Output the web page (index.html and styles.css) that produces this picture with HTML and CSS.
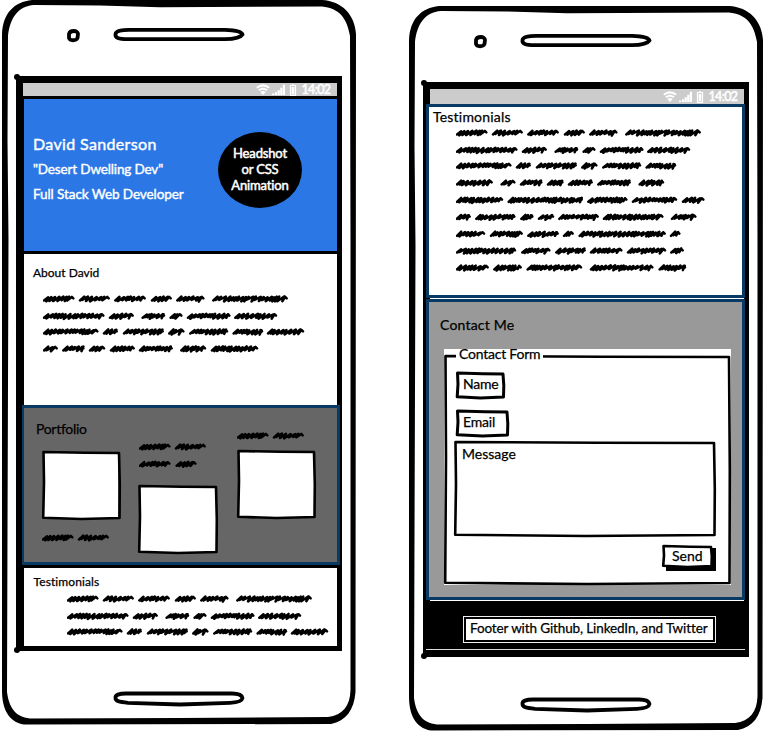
FILE: index.html
```html
<!DOCTYPE html>
<html lang="en">
<head>
<meta charset="utf-8">
<title>David Sanderson – Mobile wireframe</title>
<link rel="stylesheet" href="styles.css">
</head>
<body>
<svg class="defs" aria-hidden="true">
  <symbol id="device" viewBox="0 0 356 725">
    <path fill-rule="evenodd" d="M2 34C3 13 14 2 32 0L322 0C342 1 355 15 356 34L355.500 692C354 710 346 721 331 724L24 724.500C8 722 2 708 2 690Z M8 36L7.500 140L8.500 240L7.500 530L7 692C9 707 15 717 30 718.500L180 718L328 717C343 715 350 706 350.500 690L350.500 240L350 36C347 18 339 8 322 6.500L160 7.200L100 5.500L34 5C18 6 10 18 8 36Z"/>
    <path class="line" d="M69 34C70 30 78 30 78 34L77.500 38C76 41 70 41 69 38Z"/>
    <path class="line" d="M115.500 34C116 30 125 30 130 29.800L225 29.800C235 30 242 32 242.500 34.500C241 37 234 39 225 39.200L128 39.200C118 39 115 38 115.500 34Z"/>
    <path class="line" d="M115.500 698C115 695 119 693.500 126 693.500L232 693.500C239 693.500 242 695 242.500 698C242 701 238 702.500 230 702.800L180 704.500L128 702.800C119 702 115.500 701 115.500 698Z"/>
  </symbol>
  <symbol id="status-icons" viewBox="0 0 42 12">
    <g fill="none" stroke="#fff" stroke-width="2">
      <path d="M.8 3.800Q7 -1 13.200 3.800M2.900 6.300Q7 3.100 11.100 6.300"/>
      <path stroke-width="1.200" d="M34.500 1.500h5v10h-5zM36 .8h2"/>
    </g>
    <path fill="#fff" d="M4.300 8Q7 6.200 9.700 8L7 11ZM16 9.500h2.200v1.500h-2.200zM18.900 8.300h2.200v2.700h-2.200zM21.600 6.300h2.200v4.700h-2.200zM24.200 3.800h2.200v7.200h-2.200zM26.800 .8h2.200v10.200h-2.200zM35.700 3h2.600v7.500h-2.600z"/>
  </symbol>
</svg>

<main class="board">
  <article class="phone">
    <svg class="device"><use href="#device"/></svg>
    <div class="screen">
      <div class="status"><svg><use href="#status-icons"/></svg><span>14:02</span></div>
      <header class="hero">
        <div>
          <h1>David Sanderson</h1>
          <p class="tagline">"Desert Dwelling Dev"</p>
          <p class="role">Full Stack Web Developer</p>
        </div>
        <div class="headshot">Headshot<br>or CSS<br>Animation</div>
      </header>
      <section class="about">
        <h2 class="small about-title">About David</h2>
        <div class="scribble" data-text="about"></div>
      </section>
      <section class="portfolio">
        <h2 class="portfolio-title">Portfolio</h2>
        <div class="projects">
          <div class="project first"><div class="tile sketch"></div><div class="scribble" data-text="caption"></div></div>
          <div class="project second"><div class="scribble" data-text="captionLong"></div><div class="tile sketch"></div></div>
          <div class="project third"><div class="scribble" data-text="caption"></div><div class="tile sketch"></div></div>
        </div>
      </section>
      <section class="preview">
        <h2 class="small preview-title">Testimonials</h2>
        <div class="scribble" data-text="preview"></div>
      </section>
    </div>
  </article>

  <article class="phone lower">
    <svg class="device"><use href="#device"/></svg>
    <div class="screen">
      <div class="status tall"><svg><use href="#status-icons"/></svg><span>14:02</span></div>
      <section class="testimonials">
        <h2 class="testimonials-title">Testimonials</h2>
        <div class="scribble" data-text="testimonials"></div>
      </section>
      <section class="contact">
        <h2 class="contact-title">Contact Me</h2>
        <form class="form">
          <div class="form-frame sketch"></div>
          <div class="legend">Contact Form</div>
          <div class="field name sketch heavy"><span>Name</span></div>
          <div class="field email sketch heavy"><span>Email</span></div>
          <div class="message sketch"><span>Message</span></div>
          <div class="send sketch"><span>Send</span></div>
        </form>
      </section>
      <footer class="footer"><div class="links">Footer with Github, LinkedIn, and Twitter</div></footer>
    </div>
  </article>
</main>
<script src="script.js"></script>
</body>
</html>
```
FILE: styles.css
```css
* { box-sizing: border-box; }
body { margin: 0; background: #fff; color: #000; font-family: Lato, sans-serif; font-size: 14px; font-variant-ligatures: none; -webkit-text-stroke: 0.25px; overflow: hidden; }
h1, h2, p { margin: 0; font-weight: 400; }
h2 { font-size: 14px; line-height: 18px; }
h2.small { font-size: 12px; line-height: 16px; }
svg { display: block; }
.defs { position: absolute; width: 0; height: 0; }
.line { fill: none; stroke: #000; stroke-width: 3.8; }

.board { display: flex; gap: 51px; width: 763px; height: 731px; }
.phone { position: relative; width: 356px; height: 725px; padding: 76px 14px 0 16px; }
.phone.lower { margin-top: 6px; }
.device { position: absolute; left: 0; top: 0; width: 356px; height: 725px; }
.screen { position: relative; height: 575px; border: solid #000; border-width: 7px 5px 5px 7px; display: flex; flex-direction: column; background: #fff; }
.screen::before, .screen::after { content: ""; position: absolute; left: -9px; width: 6px; height: 6px; border-radius: 3px; background: #000; }
.screen::before { top: -9px; }
.screen::after { bottom: -7px; }

.status { flex: none; height: 13px; background: #ccc; color: #fff; display: flex; justify-content: flex-end; align-items: center; gap: 3px; padding-right: 6.5px; font-size: 12.5px; line-height: 13px; letter-spacing: -0.6px; -webkit-text-stroke: 0.5px; }
.status svg { width: 42px; height: 12px; }
.status.tall { height: 15px; }

.hero { flex: none; height: 155px; border: solid #000; border-width: 3px 0 0 1px; background: #2c77e6; color: #fff; display: flex; justify-content: space-between; padding: 35px 35px 0 9px; }
.hero h1 { font-size: 16px; line-height: 20px; letter-spacing: 0.35px; -webkit-text-stroke: 0.4px; }
.hero p { font-size: 13.5px; line-height: 18px; -webkit-text-stroke: 0.4px; }
.hero .tagline { margin-top: 6px; letter-spacing: -0.15px; }
.hero .role { margin-top: 7px; letter-spacing: -0.08px; }
.headshot { width: 84px; height: 76px; margin-top: -2px; padding-top: 14px; border-radius: 50%; background: #000; text-align: center; font-size: 13px; line-height: 15.8px; letter-spacing: -0.15px; -webkit-text-stroke: 0.5px; }

.about { flex: none; height: 154px; border: solid #000; border-width: 3px 0 0 1px; padding: 11px 0 0 9px; }
.about .scribble { margin: 12.5px 0 0 9.7px; }

.portfolio { flex: none; height: 160px; margin: 0 -3px 0 -1px; border: 3px solid #093a66; border-left-width: 2px; background: #666; padding: 11.6px 0 0 12px; }
.portfolio-title { letter-spacing: -0.3px; }
.projects { display: grid; grid-template-columns: repeat(3, 78.5px); gap: 19px; margin: -6.9px 0 0 6px; }
.tile { height: 69px; background: linear-gradient(#fff, #fff) center / calc(100% - 4px) calc(100% - 4px) no-repeat; }
.project { display: flex; flex-direction: column; }
.first { padding-top: 20px; gap: 13px; }
.first .tile, .second .tile { left: -0.5px; }
.second { padding-top: 11px; gap: 16px; margin-left: -1px; }
.third { gap: 9.5px; margin-left: -0.5px; }

.preview { flex: 1; border: solid #000; border-width: 3px 0 0 1px; padding: 5.5px 0 0 9.5px; }
.preview-title { letter-spacing: 0.1px; }
.preview .scribble { margin: 4.2px 0 0 33.2px; }

.testimonials { flex: none; height: 194px; margin: 0 -1px 0 -4px; border: 3px solid #093a66; background: #fff; padding: 0.6px 0 0 4px; }
.testimonials-title { letter-spacing: 0.2px; }
.testimonials .scribble { margin: 2px 0 0 22.7px; }
.contact { flex: none; height: 301px; margin: 1px -1px 0 -4px; border: 3px solid #093a66; background: #999; padding: 13.6px 0 0 11px; }
.contact-title { letter-spacing: 0.2px; }

.sketch { position: relative; }
.sketch > svg { position: absolute; left: 0; top: 0; overflow: visible; }
.sketch > span { position: relative; }
.form { width: 287px; height: 236px; margin: 15.4px 0 0 4px; background: #fff; position: relative; display: flex; flex-direction: column; align-items: flex-start; }
.form-frame.sketch { position: absolute; inset: 6px 0 0 0; }
.legend { position: relative; width: 87px; margin-left: 12px; padding-left: 3px; line-height: 9px; background: #fff; white-space: nowrap; letter-spacing: -0.22px; }
.field { padding-left: 7px; line-height: 24px; letter-spacing: -0.2px; }
.name { width: 49px; height: 26.5px; margin: 14px 0 0 12px; }
.email { width: 53px; height: 27px; margin: 11.5px 0 0 12px; }
.message { width: 262px; height: 96px; margin: 4px 0 0 10px; padding: 4px 0 0 8px; line-height: 18px; }
.send { width: 51px; height: 23px; margin: 8px 0 0 218px; padding-left: 10px; line-height: 22px; background: #fff; }
.send::after { content: ""; position: absolute; left: 4px; top: 3px; right: -3px; bottom: -3px; border: solid #000; border-width: 0 4px 4px 0; }

.footer { flex: 1; margin: 1px -1px 2px -4px; background: #000; border-bottom: 1px solid #ddd; padding: 15px 0 0 37px; box-shadow: 0 2px #000; }
.links { width: 253px; height: 27px; border: 1px solid #eee; box-shadow: inset 0 0 0 2px #000; background: #fff; padding-left: 6px; line-height: 23px; white-space: nowrap; font-size: 13.5px; letter-spacing: -0.12px; }
```
FILE: script.js
```js
const NS = "http://www.w3.org/2000/svg";

// Every line is a list of [start, end] word extents, in thirds of a pixel.
const intro = [
  [[0,94],[108,200],[214,308],[324,386],[400,484],[508,734]],
  [[0,184],[198,272],[296,366],[380,418],[432,562],[574,702]],
  [[0,166],[180,224],[240,362],[376,424],[439,555],[569,660],[672,783]]
];
const texts = {
  about: [...intro, [[0,44],[58,124],[138,186],[201,275],[288,389],[412,489],[504,645]]],
  preview: intro,
  caption: [[[0,94],[108,200]]],
  captionLong: [[[0,94],[108,200]], [[0,94],[110,172]]],
  testimonials: [
    intro[0], intro[1], intro[2].slice(0, 6),
    [[0,110],[134,178],[192,259],[273,322],[336,410],[424,524],[548,624]],
    [[0,141],[155,380],[394,514],[528,663],[678,745]],
    [[0,44],[58,178],[193,232],[246,294],[307,428],[441,622],[645,721]],
    [[0,87],[102,200],[214,308],[321,353],[368,629],[642,673]],
    [[0,180],[196,283],[298,389],[402,499],[513,630],[643,683]],
    [[0,98],[112,197],[212,378],[402,592],[608,690]]
  ]
};
const centers = [5, 22.3, 38, 55, 72.3, 89.3, 106.3, 123, 140];

function addPath(parent, w, h, d, width) {
  const svg = document.createElementNS(NS, "svg");
  svg.setAttribute("width", w);
  svg.setAttribute("height", h);
  const path = document.createElementNS(NS, "path");
  path.setAttribute("d", d);
  path.setAttribute("fill", "none");
  path.setAttribute("stroke", "#000");
  path.setAttribute("stroke-width", width);
  path.setAttribute("stroke-linejoin", "round");
  path.setAttribute("stroke-linecap", "round");
  svg.appendChild(path);
  parent.prepend(svg);
}

document.querySelectorAll(".scribble").forEach(el => {
  const lines = texts[el.dataset.text];
  let seed = 7, d = "", right = 0;
  const rand = () => (seed = (seed * 16807) % 2147483647) / 2147483647;
  lines.forEach((words, row) => {
    const y = centers[row] - 0.3;
    words.forEach(([a, b]) => {
      let x = a / 3 + 1;
      const end = b / 3 - 1;
      right = Math.max(right, end + 2);
      d += `M${x} ${y + 1.8}`;
      while (x < end - 4) {
        const up = 1.4 + rand() * 0.9, down = 1 + rand() * 1.9;
        d += `L${(x + 4.2).toFixed(1)} ${(y - up).toFixed(1)}L${(x + 2.3).toFixed(1)} ${(y + down).toFixed(1)}`;
        x += 2.3 + rand() * 2.7;
      }
      d += `L${end - 1.5} ${y - 1.8}L${end} ${y - 0.4}`;
    });
  });
  addPath(el, right, centers[lines.length - 1] + 5, d, 2.5);
});

document.querySelectorAll(".sketch").forEach(el => {
  const w = el.offsetWidth, h = el.offsetHeight;
  const d = `M1.500 1L${w * .55} 1.800L${w - 2} 2L${w - 1.200} ${h * .5}L${w - 1.500} ${h - 2}` +
    `L${w * .5} ${h - 1}L1.200 ${h - 2.200}L2 ${h * .45}Z`;
  addPath(el, w, h, d, el.classList.contains("heavy") ? 3 : 2.6);
});
```
